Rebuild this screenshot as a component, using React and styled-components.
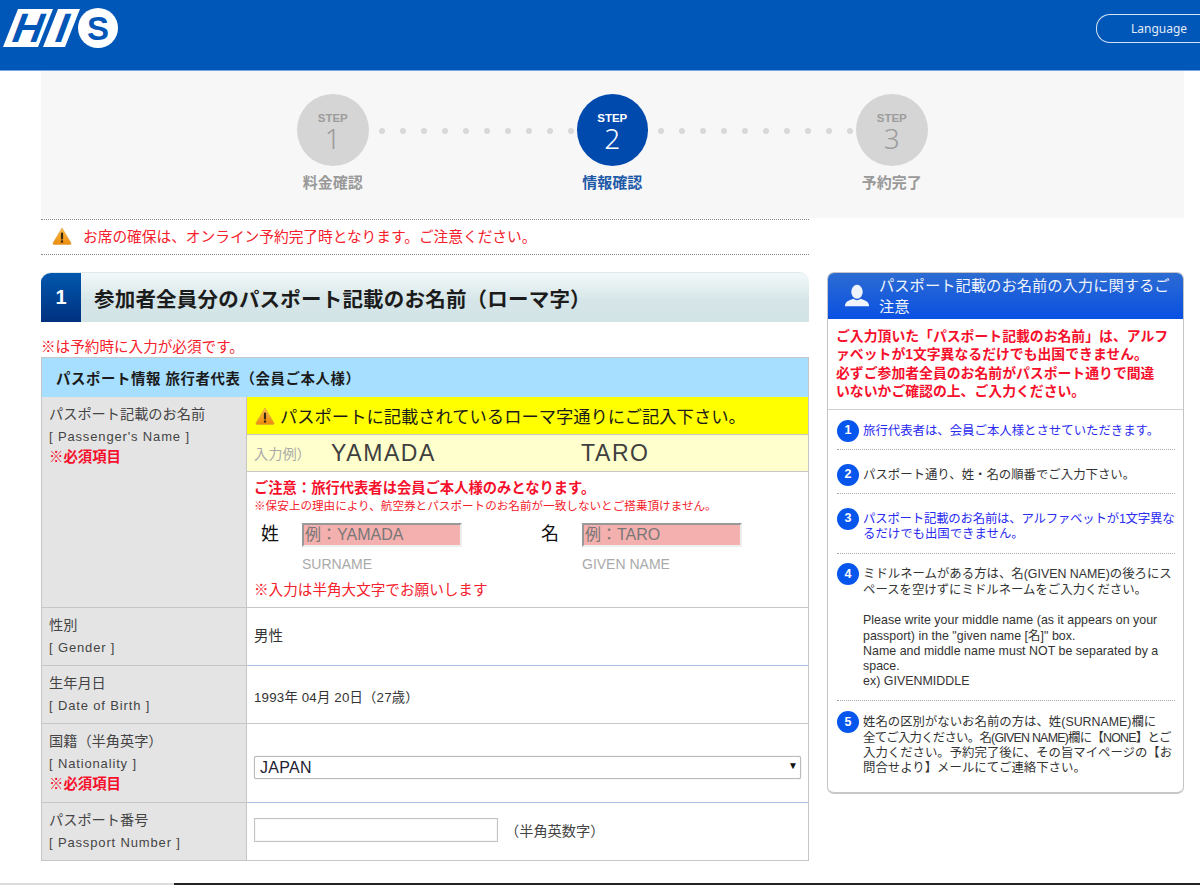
import React from 'react';
import styled, { createGlobalStyle } from 'styled-components';

const GlobalStyle = createGlobalStyle`
	html, body {
		margin: 0;
		height: 885px;
		overflow: hidden;
		background: #fff;
		font-family: 'Liberation Sans', 'Noto Sans CJK JP', sans-serif;
		color: #333;
	}
	* {
		box-sizing: border-box;
	}
`;

const Header = styled.header`
	display: flex;
	justify-content: space-between;
	height: 71px;
	background: #0057b8;
	border-bottom: 1px solid #7aa6dc;
`;

const Logo = styled.svg`
	display: block;
	width: 120px;
	height: 52px;
	margin-top: 4px;
`;

const LanguageButton = styled.div`
	display: flex;
	align-items: center;
	width: 104px;
	height: 29px;
	margin-top: 14px;
	padding-left: 34px;
	border: 1px solid #d5e2f3;
	border-right: 0;
	border-radius: 14px 0 0 14px;
	color: #e3ecf8;
	font-size: 12px;
	font-family: 'Noto Sans', sans-serif;
`;

const StepPanel = styled.div`
	width: 1143px;
	height: 147px;
	margin-left: 41px;
	padding: 23px 0 0 256px;
	background: #f7f7f7;
	display: flex;
	align-items: flex-start;
`;

const Step = styled.div`
	width: 71.5px;
	display: flex;
	flex-direction: column;
	align-items: center;
	flex: none;
`;

const Circle = styled.div`
	width: 71.5px;
	height: 72px;
	border-radius: 50%;
	display: flex;
	flex-direction: column;
	align-items: center;
	padding-top: 18px;
	background: ${props => (props.$active ? '#0049ad' : '#d5d5d5')};
	color: ${props => (props.$active ? '#fff' : '#9c9c9c')};
`;

const StepWord = styled.span`
	font-size: 11.5px;
	line-height: 13px;
	font-weight: 700;
`;

const StepNumber = styled.span`
	font-family: 'Noto Sans', sans-serif;
	font-size: 28px;
	line-height: 27px;
	font-weight: 300;
`;

const StepLabel = styled.div`
	margin-top: 7px;
	font-size: 15px;
	line-height: 19px;
	font-weight: 700;
	white-space: nowrap;
	color: ${props => (props.$active ? '#1e5aa8' : '#999')};
`;

const Dots = styled.div`
	width: 208px;
	flex: none;
	display: flex;
	gap: 15px;
	margin-top: 34px;
	padding-left: 10px;
`;

const Dot = styled.i`
	width: 6px;
	height: 6px;
	border-radius: 50%;
	background: #d8d8d8;
	flex: none;
`;

const Notice = styled.div`
	display: flex;
	align-items: center;
	gap: 11px;
	width: 768px;
	height: 36px;
	margin: 1px 0 17px 41px;
	padding: 0 0 3px 11px;
	border-top: 1px dotted #888;
	border-bottom: 1px dotted #888;
	color: #f5202c;
	font-size: 14.7px;
`;

const Main = styled.div`
	display: flex;
	align-items: flex-start;
	gap: 18px;
	margin-left: 41px;
`;

const Column = styled.div`
	width: 768px;
	flex: none;
`;

const SectionHead = styled.div`
	display: flex;
	height: 50px;
	border-radius: 10px 10px 0 0;
	background: linear-gradient(#f3f9fa, #d6e6e8 55%, #d3e4e6);
	border-top: 1px solid #dfe9ea;
	overflow: hidden;
`;

const SectionNumber = styled.div`
	width: 40px;
	display: flex;
	align-items: center;
	justify-content: center;
	background: linear-gradient(#0058ae, #01307f);
	color: #fff;
	font-size: 20px;
	font-weight: 700;
`;

const SectionTitle = styled.h1`
	margin: 0;
	padding-left: 13px;
	align-self: center;
	color: #1c1c1c;
	font-size: 20.5px;
	font-weight: 700;
	letter-spacing: 0.2px;
`;

const RequiredNote = styled.p`
	margin: 0;
	padding-top: 16px;
	height: 35px;
	line-height: 19px;
	color: #f5202c;
	font-size: 14.6px;
	white-space: nowrap;
`;

const Table = styled.div`
	border: 1px solid #c6c6c6;
	border-bottom: 0;
`;

const TableHead = styled.div`
	height: 39px;
	display: flex;
	align-items: center;
	padding-left: 14px;
	background: #a6dfff;
	color: #1b1b1b;
	font-size: 14.4px;
	font-weight: 700;
	letter-spacing: 0.6px;
`;

const Row = styled.div`
	display: flex;
	height: ${props => props.$height}px;
	border-bottom: 1px solid #c6c6c6;
`;

const Label = styled.div`
	width: 205px;
	flex: none;
	padding: 7px 0 0 7px;
	background: #e4e4e4;
	border-right: 1px solid #c6c6c6;
	color: #444;
	font-size: 14.2px;
	line-height: 21px;
`;

const LabelEn = styled.div`
	margin-top: 1px;
	letter-spacing: 0.85px;
	font-size: 13px;
`;

const Required = styled.div`
	color: #f5102c;
	font-size: 14.4px;
	font-weight: 700;
`;

const Value = styled.div`
	flex: 1;
	display: flex;
	align-items: center;
	padding: ${props => props.$top || 0}px 0 ${props => props.$bottom || 0}px 7px;
	margin-bottom: -1px;
	border-bottom: 1px solid ${props => (props.$blue ? '#a9c1e2' : '#c6c6c6')};
	color: #333;
	font-size: ${props => props.$size || 14.5}px;
`;

const BirthDate = styled.span`
	letter-spacing: 0.2px;
`;

const NameCell = styled.div`
	flex: 1;
	min-width: 0;
`;

const YellowBar = styled.div`
	display: flex;
	align-items: center;
	gap: 5px;
	height: 38px;
	padding-left: 8px;
	background: #ff0;
	border-bottom: 1px solid #c6c6c6;
	color: #1a1a1a;
	font-size: 17.3px;
	white-space: nowrap;
`;

const Example = styled.div`
	display: flex;
	align-items: center;
	height: 37px;
	padding-left: 7px;
	background: #ffffcd;
	border-bottom: 1px solid #c6c6c6;
`;

const ExampleLabel = styled.span`
	width: 77px;
	flex: none;
	color: #aaa;
	font-size: 14.2px;
`;

const ExampleName = styled.span`
	width: 250px;
	flex: none;
	color: #3f3f3f;
	font-size: 23px;
	letter-spacing: 1.6px;
`;

const NameBody = styled.div`
	padding: 8px 0 0 7px;
`;

const Caution = styled.div`
	color: #f5102c;
	font-size: 14.3px;
	line-height: 17px;
	font-weight: 700;
	white-space: nowrap;
`;

const SmallCaution = styled.div`
	margin-top: 1px;
	color: #f5202c;
	font-size: 11.6px;
	line-height: 16px;
	white-space: nowrap;
`;

const NameFields = styled.div`
	display: flex;
	margin-top: 9px;
`;

const NameField = styled.div`
	display: flex;
	flex: none;
	width: 280px;
`;

const NameKanji = styled.span`
	width: 48px;
	padding-left: 7px;
	color: #111;
	font-size: 18px;
	line-height: 23px;
`;

const NameInputs = styled.div`
	display: flex;
	flex-direction: column;
`;

const NameInput = styled.input`
	width: 160px;
	height: 24px;
	padding: 0 1px;
	background: #f4b0ae;
	border: 2px solid #eee;
	border-top-color: #989898;
	border-left-color: #989898;
	font-family: inherit;
	font-size: 16px;
	outline: 0;
	&::placeholder {
		color: #777;
		opacity: 1;
	}
`;

const NameCaption = styled.span`
	margin-top: 9px;
	color: #aaa;
	font-size: 14px;
	line-height: 17px;
`;

const InputNote = styled.div`
	margin-top: 8px;
	color: #f5202c;
	font-size: 14.6px;
	line-height: 18px;
`;

const SelectWrap = styled.div`
	position: relative;
	width: 547px;
	height: 23px;
	&::after {
		content: '▼';
		position: absolute;
		top: 4px;
		right: 3px;
		color: #111;
		font-size: 10px;
		pointer-events: none;
	}
`;

const Select = styled.select`
	appearance: none;
	width: 100%;
	height: 100%;
	padding-left: 5px;
	background: #fff;
	border: 1px solid #bbb;
	border-radius: 2px;
	box-shadow: 0 0 1px #aaa;
	color: #223;
	font-family: inherit;
	font-size: 16px;
	letter-spacing: 0.3px;
`;

const PassportInput = styled.input`
	width: 244px;
	height: 24px;
	background: #fff;
	border: 1px solid #c2c2c2;
	box-shadow: inset 0 0 1px #bbb;
`;

const InputHint = styled.span`
	margin-left: 7px;
	color: #444;
	font-size: 14.2px;
`;

const Side = styled.aside`
	width: 357px;
	flex: none;
	height: 522px;
	border: 1px solid #c4c4c4;
	border-bottom: 2px solid #c8c8c8;
	border-radius: 7px;
	overflow: hidden;
`;

const SideHead = styled.div`
	display: flex;
	align-items: center;
	height: 47px;
	margin: -1px -1px 0;
	padding: 0 8px 0 17px;
	background: linear-gradient(#2d6cd2, #0a50e2);
	color: #eef3fc;
	font-size: 15.3px;
	line-height: 21px;
`;

const PersonIcon = styled.svg`
	width: 26px;
	height: 26px;
	flex: none;
	margin-right: 9px;
`;

const SideWarning = styled.div`
	height: 91px;
	padding: 8px 0 0 8px;
	border-bottom: 1px solid #cfcfcf;
	color: #f5102c;
	font-size: 13.85px;
	line-height: 18.4px;
	font-weight: 700;
	white-space: nowrap;
`;

const Items = styled.ol`
	margin: 0;
	padding: 0 8px 0 9px;
	list-style: none;
`;

const Item = styled.li`
	display: flex;
	gap: 4px;
	padding: ${props => props.$top}px 0 ${props => props.$bottom}px;
	border-bottom: ${props => (props.$last ? '0' : '1px dotted #aaa')};
	color: ${props => (props.$blue ? '#2a2af0' : '#333')};
	font-size: 12.4px;
	line-height: 15.3px;
	white-space: nowrap;
`;

const ItemNumber = styled.span`
	width: 22px;
	height: 22px;
	flex: none;
	margin: -3.9px 0 -5px;
	display: flex;
	align-items: center;
	justify-content: center;
	border-radius: 50%;
	background: #0656ee;
	color: #fff;
	font-size: 12.5px;
	font-weight: 700;
`;

const EnglishNote = styled.div`
	margin-top: 15.3px;
	letter-spacing: 0.03px;
`;

const TightLine = styled.span`
	letter-spacing: ${props => props.$spacing}px;
`;

const Footer = styled.div`
	position: fixed;
	left: 0;
	right: 0;
	top: 883px;
	height: 2px;
	padding-left: 174px;
	background: #ddd;
	&::after {
		content: '';
		display: block;
		height: 2px;
		background: #222;
	}
`;

const WarningIcon = ({ width = 20, height = 18 }) => (
	<svg width={width} height={height} viewBox="0 0 20 18">
		<defs>
			<linearGradient id="warn" x1="0" y1="0" x2="0" y2="1">
				<stop offset="0" stopColor="#ffc24a" />
				<stop offset="1" stopColor="#ec8a0c" />
			</linearGradient>
		</defs>
		<path d="M10 1 L19 16 Q19.4 17.4 18 17.4 H2 Q.6 17.4 1 16 Z" fill="url(#warn)" stroke="#d99a3a" strokeWidth=".6" />
		<rect x="8.9" y="5.6" width="2.2" height="7" rx="1" fill="#3a2a10" />
		<rect x="8.9" y="13.4" width="2.2" height="2.2" fill="#3a2a10" />
	</svg>
);

const steps = [
	{ number: 1, label: '料金確認' },
	{ number: 2, label: '情報確認', active: true },
	{ number: 3, label: '予約完了' }
];

const App = () => (
	<>
		<GlobalStyle />
		<Header>
			<Logo viewBox="0 0 120 52">
				<polygon points="3,43 18,5 53,5 38,43" fill="#fff" />
				<polygon points="43,43 58,5 80,5 65,43" fill="#fff" />
				<circle cx="98" cy="24" r="20" fill="#fff" />
				<text transform="translate(26 38) skewX(-10)" textAnchor="middle" fontFamily="Liberation Sans" fontWeight="700" fontStyle="italic" fontSize="41" fill="#0057b8">H</text>
				<text transform="translate(60 38) skewX(-10)" textAnchor="middle" fontFamily="Liberation Sans" fontWeight="700" fontStyle="italic" fontSize="41" fill="#0057b8">I</text>
				<text x="98" y="36" textAnchor="middle" fontFamily="Liberation Sans" fontWeight="700" fontSize="33" fill="#0057b8">S</text>
			</Logo>
			<LanguageButton>Language</LanguageButton>
		</Header>
		<StepPanel>
			{steps.map((step, index) => (
				<React.Fragment key={step.number}>
					<Step>
						<Circle $active={step.active}>
							<StepWord>STEP</StepWord>
							<StepNumber>{step.number}</StepNumber>
						</Circle>
						<StepLabel $active={step.active}>{step.label}</StepLabel>
					</Step>
					{index < 2 && (
						<Dots>
							{Array.from({ length: 10 }, (_, i) => (
								<Dot key={i} />
							))}
						</Dots>
					)}
				</React.Fragment>
			))}
		</StepPanel>
		<Notice>
			<WarningIcon />
			お席の確保は、オンライン予約完了時となります。ご注意ください。
		</Notice>
		<Main>
			<Column>
				<SectionHead>
					<SectionNumber>1</SectionNumber>
					<SectionTitle>参加者全員分のパスポート記載のお名前（ローマ字）</SectionTitle>
				</SectionHead>
				<RequiredNote>※は予約時に入力が必須です。</RequiredNote>
				<Table>
					<TableHead>パスポート情報 旅行者代表（会員ご本人様）</TableHead>
					<Row $height={211}>
						<Label>
							パスポート記載のお名前
							<LabelEn>[ Passenger's Name ]</LabelEn>
							<Required>※必須項目</Required>
						</Label>
						<NameCell>
							<YellowBar>
								<WarningIcon />
								パスポートに記載されているローマ字通りにご記入下さい。
							</YellowBar>
							<Example>
								<ExampleLabel>入力例）</ExampleLabel>
								<ExampleName>YAMADA</ExampleName>
								<ExampleName>TARO</ExampleName>
							</Example>
							<NameBody>
								<Caution>ご注意：旅行代表者は会員ご本人様のみとなります。</Caution>
								<SmallCaution>※保安上の理由により、航空券とパスポートのお名前が一致しないとご搭乗頂けません。</SmallCaution>
								<NameFields>
									<NameField>
										<NameKanji>姓</NameKanji>
										<NameInputs>
											<NameInput placeholder="例：YAMADA" />
											<NameCaption>SURNAME</NameCaption>
										</NameInputs>
									</NameField>
									<NameField>
										<NameKanji>名</NameKanji>
										<NameInputs>
											<NameInput placeholder="例：TARO" />
											<NameCaption>GIVEN NAME</NameCaption>
										</NameInputs>
									</NameField>
								</NameFields>
								<InputNote>※入力は半角大文字でお願いします</InputNote>
							</NameBody>
						</NameCell>
					</Row>
					<Row $height={58}>
						<Label>
							性別
							<LabelEn>[ Gender ]</LabelEn>
						</Label>
						<Value $blue $bottom={4}>男性</Value>
					</Row>
					<Row $height={58}>
						<Label>
							生年月日
							<LabelEn>[ Date of Birth ]</LabelEn>
						</Label>
						<Value $size={13.3} $top={4}>
							<BirthDate>1993年 04月 20日（27歳）</BirthDate>
						</Value>
					</Row>
					<Row $height={79}>
						<Label>
							国籍（半角英字）
							<LabelEn>[ Nationality ]</LabelEn>
							<Required>※必須項目</Required>
						</Label>
						<Value $blue $top={8}>
							<SelectWrap>
								<Select defaultValue="JAPAN">
									<option>JAPAN</option>
								</Select>
							</SelectWrap>
						</Value>
					</Row>
					<Row $height={58}>
						<Label>
							パスポート番号
							<LabelEn>[ Passport Number ]</LabelEn>
						</Label>
						<Value $bottom={4}>
							<PassportInput />
							<InputHint>（半角英数字）</InputHint>
						</Value>
					</Row>
				</Table>
			</Column>
			<Side>
				<SideHead>
					<PersonIcon viewBox="0 0 28 28">
						<ellipse cx="14" cy="9.5" rx="6.2" ry="7.5" fill="#eef3fc" />
						<path d="M1 25 Q1 20 6 18.5 L10 17 Q14 20 18 17 L22 18.5 Q27 20 27 25 Z" fill="#eef3fc" />
					</PersonIcon>
					パスポート記載のお名前の入力に関するご注意
				</SideHead>
				<SideWarning>
					ご入力頂いた「パスポート記載のお名前」は、アルフ
					<br />
					ァベットが1文字異なるだけでも出国できません。
					<br />
					必ずご参加者全員のお名前がパスポート通りで間違
					<br />
					いないかご確認の上、ご入力ください。
				</SideWarning>
				<Items>
					<Item $blue $top={14} $bottom={9.7}>
						<ItemNumber>1</ItemNumber>
						<span>旅行代表者は、会員ご本人様とさせていただきます。</span>
					</Item>
					<Item $top={17.9} $bottom={9.8}>
						<ItemNumber>2</ItemNumber>
						<span>パスポート通り、姓・名の順番でご入力下さい。</span>
					</Item>
					<Item $blue $top={17.9} $bottom={10.5}>
						<ItemNumber>3</ItemNumber>
						<span>
							<TightLine $spacing={-0.2}>パスポート記載のお名前は、アルファベットが1文字異な</TightLine>
							<br />
							るだけでも出国できません。
						</span>
					</Item>
					<Item $top={13.4} $bottom={10.2}>
						<ItemNumber>4</ItemNumber>
						<span>
							ミドルネームがある方は、名(GIVEN NAME)の後ろにス
							<br />
							ペースを空けずにミドルネームをご入力ください。
							<EnglishNote>
								Please write your middle name (as it appears on your
								<br />
								passport) in the "given name [名]" box.
								<br />
								Name and middle name must NOT be separated by a
								<br />
								space.
								<br />
								ex) GIVENMIDDLE
							</EnglishNote>
						</span>
					</Item>
					<Item $last $top={14.4} $bottom={0}>
						<ItemNumber>5</ItemNumber>
						<span>
							姓名の区別がないお名前の方は、姓(SURNAME)欄に
							<br />
							<TightLine $spacing={-0.75}>全てご入力ください。名(GIVEN NAME)欄に【NONE】とご</TightLine>
							<br />
							入力ください。予約完了後に、その旨マイページの【お
							<br />
							問合せより】メールにてご連絡下さい。
						</span>
					</Item>
				</Items>
			</Side>
		</Main>
		<Footer />
	</>
);

export default App;
